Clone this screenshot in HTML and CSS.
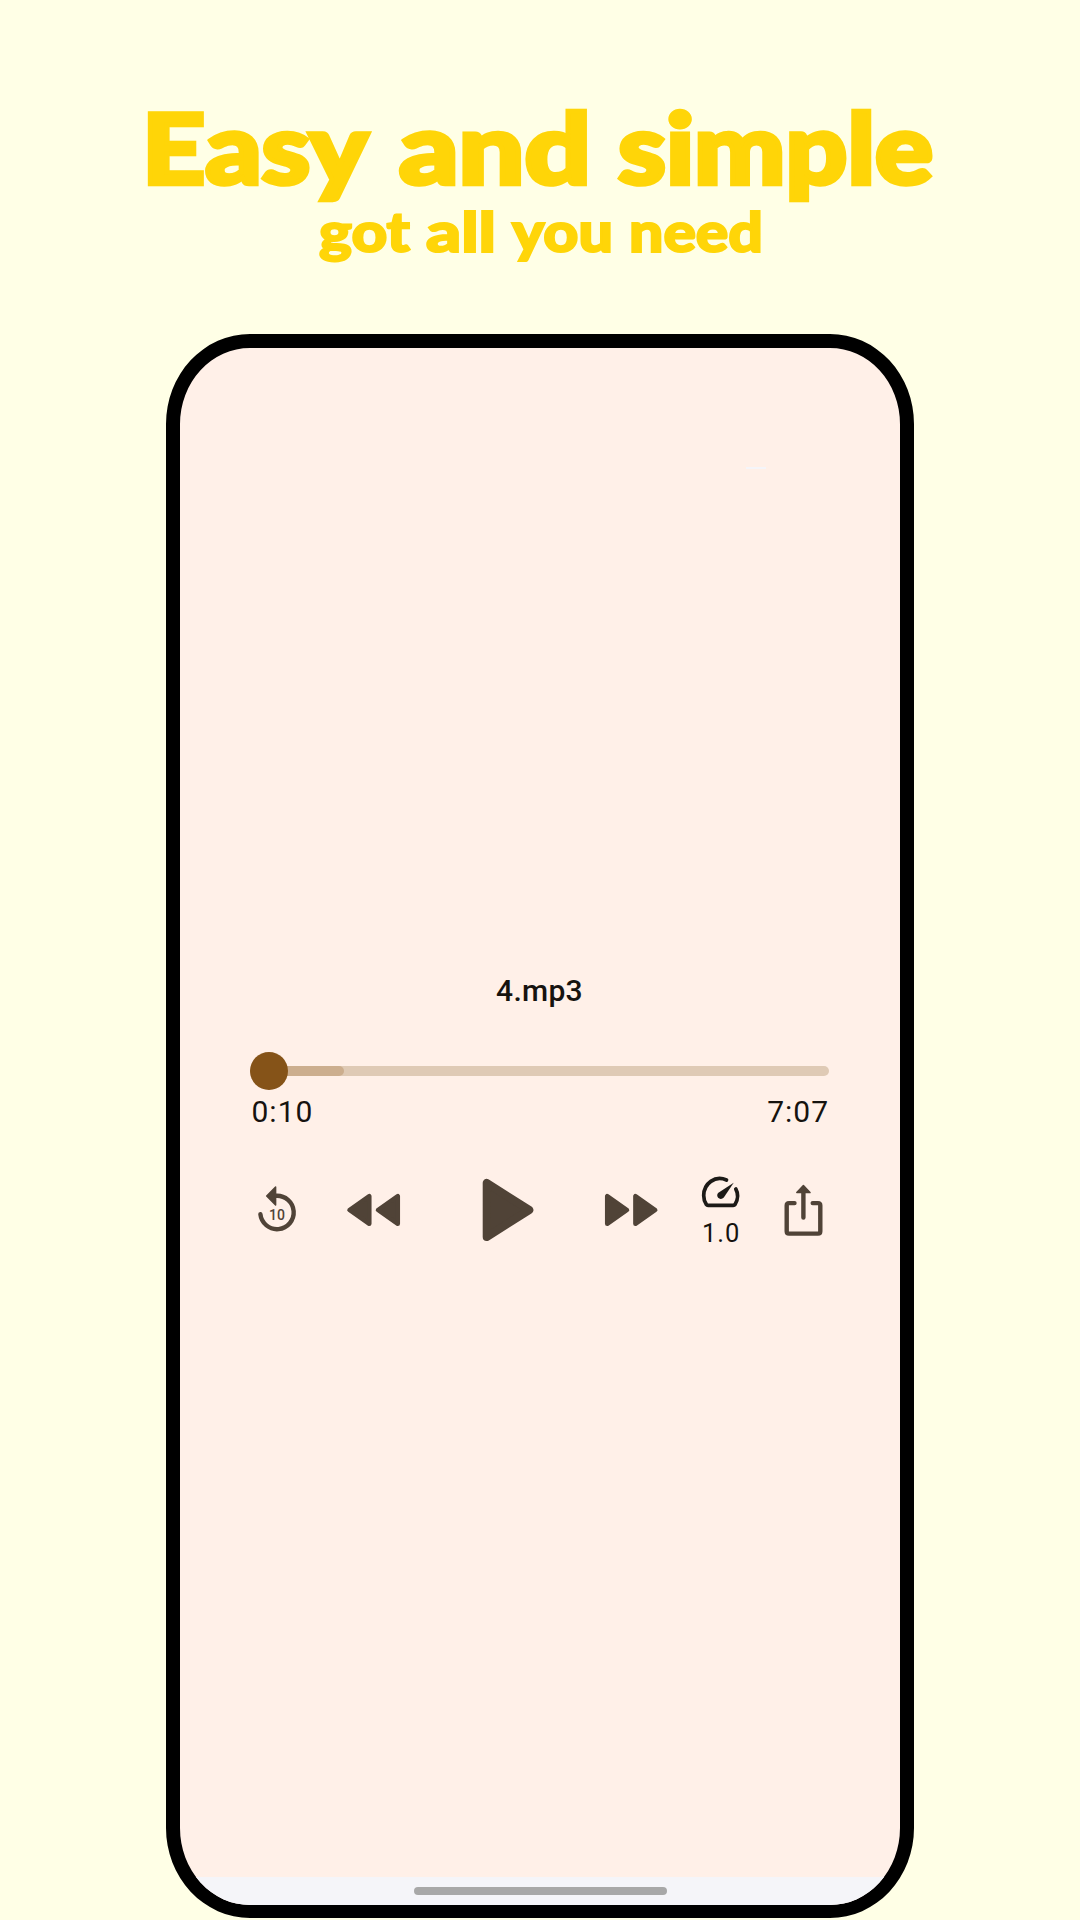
FILE: index.html
```html
<!DOCTYPE html>
<html lang="en">
<head>
<meta charset="utf-8">
<title>Easy and simple</title>
<link rel="stylesheet" href="styles.css">
</head>
<body>
<main class="promo">
  <svg class="headline" width="1080" height="334" viewBox="0 0 1080 334" role="img">
    <g class="headline-title">
      <text x="142" y="183.500" textLength="226" lengthAdjust="spacingAndGlyphs">Easy</text>
      <text x="399" y="183.500" textLength="192" lengthAdjust="spacingAndGlyphs">and</text>
      <text x="618" y="183.500" textLength="315" lengthAdjust="spacingAndGlyphs">simple</text>
    </g>
    <g class="headline-sub">
      <text x="319" y="251.500" textLength="91" lengthAdjust="spacingAndGlyphs">got</text>
      <text x="426" y="251.500" textLength="70" lengthAdjust="spacingAndGlyphs">all</text>
      <text x="512" y="251.500" textLength="101" lengthAdjust="spacingAndGlyphs">you</text>
      <text x="629" y="251.500" textLength="134" lengthAdjust="spacingAndGlyphs">need</text>
    </g>
  </svg>
  <section class="phone">
    <span class="glint"></span>
    <div class="player">
      <h1 class="track-name">4.mp3</h1>
      <div class="slider">
        <div class="rail"></div>
        <div class="buffered"></div>
        <div class="thumb"></div>
      </div>
      <div class="times"><span>0:10</span><span>7:07</span></div>
      <div class="controls">
        <svg class="icon" width="50" height="80" viewBox="0 0 50 80">
          <path class="line" d="M10.400 44.300A16.700 16.700 0 1 0 26 25.800"/>
          <path class="solid" d="M25.600 17L16.700 26L25.600 35Z"/>
          <text class="seconds" x="27" y="49.600">10</text>
        </svg>
        <svg class="icon" width="66" height="80" viewBox="0 0 66 80">
          <path class="solid wide" d="M29.300 26.200V53.800L9.500 40ZM57.800 26.200V53.800L38 40Z"/>
        </svg>
        <svg class="icon" width="62" height="80" viewBox="0 0 62 80">
          <path class="solid play" d="M8.700 13V67L51.300 40Z"/>
        </svg>
        <svg class="icon" width="64" height="80" viewBox="0 0 64 80">
          <path class="solid wide" d="M7.200 26.200V53.800L27 40ZM35.400 26.200V53.800L55.200 40Z"/>
        </svg>
        <div class="speed">
          <svg width="42" height="44" viewBox="0 0 42 44">
            <path class="dial" d="M26.500 10C15 5 3.800 13.500 3.700 25.500C3.700 29.500 5 32.500 6.300 34.400C6.800 35.100 7 35.300 8 35.300H33.200C34.200 35.300 34.600 35.100 35.100 34.400C38 29.400 38.500 23.900 35.800 19"/>
            <path class="needle" d="M33.700 12.700L23.800 27.600C20.300 31.300 14.700 26.500 18.400 22.800Z"/>
          </svg>
          <span>1.0</span>
        </div>
        <svg class="icon" width="50" height="80" viewBox="0 0 50 80">
          <path class="line" d="M14.500 33.100H9Q6.700 33.100 6.700 35.400V61.300Q6.700 63.600 9 63.600H38Q40.300 63.600 40.300 61.300V35.400Q40.300 33.100 38 33.100H32.700M23.400 47.500V22"/>
          <path class="solid" d="M23.400 15.500L30 22.600H16.800Z"/>
        </svg>
      </div>
    </div>
    <div class="navbar"><span class="pill"></span></div>
  </section>
</main>
</body>
</html>
```

FILE: styles.css
```css
* { box-sizing: border-box; }
body {
  margin: 0;
  background: #ffffe6;
  font-family: Roboto, "Liberation Sans", sans-serif;
  color: #16130f;
}
.promo {
  width: 1080px;
  height: 1920px;
  overflow: hidden;
  display: flex;
  flex-direction: column;
  align-items: center;
}
.headline { display: block; flex: none; }
.headline text {
  font-family: Lato, sans-serif;
  font-weight: 900;
  fill: #ffd508;
  stroke: #ffd508;
  stroke-linejoin: miter;
  stroke-miterlimit: 3;
}
.headline-title text { font-size: 98px; stroke-width: 4.500px; }
.headline-sub text { font-size: 55px; stroke-width: 2px; }

.phone {
  position: relative;
  flex: none;
  width: 748px;
  height: 1584px;
  border: 14px solid #000;
  border-bottom-width: 13px;
  border-radius: 84px / 90px;
  background: #fff0e8;
  overflow: hidden;
  display: flex;
  flex-direction: column;
  justify-content: space-between;
}
.glint {
  position: absolute;
  left: 566px;
  top: 119px;
  width: 20px;
  height: 2px;
  background: #f5f5f9;
}
.player { margin: 621px 71px 0 70px; }
.track-name {
  margin: 0;
  height: 44px;
  line-height: 44px;
  font-size: 30px;
  font-weight: 500;
  letter-spacing: 0.300px;
  text-align: center;
}
.slider {
  height: 38px;
  margin-top: 39px;
  display: grid;
  grid-template-areas: "bar";
  align-items: center;
}
.rail, .buffered, .thumb { grid-area: bar; }
.rail {
  height: 10px;
  border-radius: 5px;
  background: #dfcab5;
}
.buffered {
  width: 94px;
  height: 10px;
  border-radius: 5px;
  background: #ccae8e;
}
.thumb {
  width: 38px;
  height: 38px;
  border-radius: 50%;
  background: #855318;
}
.times {
  height: 44px;
  line-height: 44px;
  padding-left: 1.500px;
  display: flex;
  justify-content: space-between;
  font-size: 30px;
  letter-spacing: 1px;
}
.controls {
  margin-top: 36px;
  display: grid;
  grid-template-columns: 90px 138px 122px 100px 80px 50px;
}
.icon, .speed svg { display: block; }
.line { fill: none; stroke: #504337; stroke-width: 4.400; stroke-linecap: round; stroke-linejoin: round; }
.solid { fill: #504337; stroke: #504337; stroke-width: 1.500; stroke-linejoin: round; }
.wide { stroke-width: 4.500; }
.play { stroke-width: 8; }
.dial { fill: none; stroke: #1c1a17; stroke-width: 3.700; stroke-linecap: round; }
.needle { fill: #1c1a17; }
.seconds { fill: #504337; font-size: 14px; font-weight: 500; text-anchor: middle; }
.speed { width: 42px; }
.speed span {
  display: block;
  height: 38px;
  line-height: 38px;
  margin-left: 2px;
  font-size: 25.500px;
  letter-spacing: 1px;
  white-space: nowrap;
}
.navbar {
  height: 28px;
  background: #f5f5f9;
  display: flex;
  justify-content: center;
  padding-top: 10px;
}
.pill { width: 253px; height: 8px; border-radius: 4px; background: #a8a8a8; }
```
